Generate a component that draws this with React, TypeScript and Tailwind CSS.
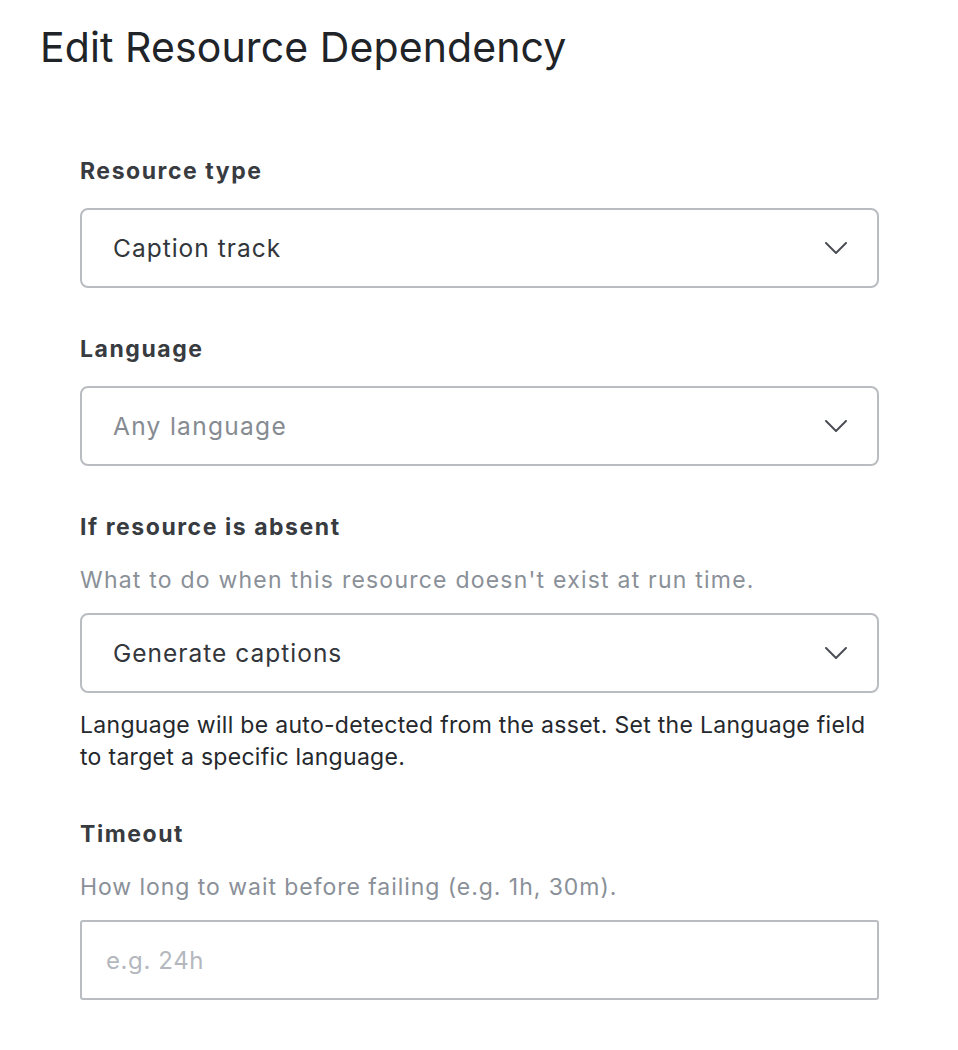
import React from "react";

function Chevron() {
  return (
    <svg width="22" height="12" viewBox="0 0 22 12" fill="none" className="shrink-0">
      <path d="M1 1L11 11L21 1" stroke="#4b4f55" strokeWidth="2" strokeLinecap="round" strokeLinejoin="round" />
    </svg>
  );
}

function Select({ value, placeholder }: { value: string; placeholder?: boolean }) {
  return (
    <div className="flex h-[80px] items-center justify-between rounded-[8px] border-2 border-[#b9bcc1] bg-white pl-[31px] pr-[30px]">
      <span
        className={
          placeholder
            ? "text-[24.5px] tracking-[1.3px] text-[#868b92]"
            : "text-[24.5px] tracking-[1px] text-[#33363b]"
        }
      >
        {value}
      </span>
      <Chevron />
    </div>
  );
}

const label = "text-[23px] font-bold leading-[30px] tracking-[1.55px] text-[#383b40]";

export default function App() {
  return (
    <div className="min-h-[1050px] w-[958px] bg-white font-['Inter',sans-serif]">
      <h1 className="pl-[40px] pt-[23px] text-[41px] font-normal leading-[48px] tracking-[0.1px] text-[#202328]">
        Edit Resource Dependency
      </h1>
      <div className="ml-[80px] mt-[85px] w-[799px]">
        <div className={label}>Resource type</div>
        <div className="mt-[22px]">
          <Select value="Caption track" />
        </div>

        <div className={"mt-[46px] " + label}>Language</div>
        <div className="mt-[22px]">
          <Select value="Any language" placeholder />
        </div>

        <div className={"mt-[46px] " + label}>If resource is absent</div>
        <div className="mt-[22px] text-[23px] leading-[32px] tracking-[1.22px] text-[#8a9098]">
          What to do when this resource doesn't exist at run time.
        </div>
        <div className="mt-[17px]">
          <Select value="Generate captions" />
        </div>
        <div className="mt-[16px] text-[23px] leading-[32px] tracking-[0.3px] text-[#25282c]">
          Language will be auto-detected from the asset. Set the Language field to target a specific language.
        </div>

        <div className="mt-[46px]">
          <div className={label}>Timeout</div>
        </div>
        <div className="mt-[22px] text-[23px] leading-[32px] tracking-[0.95px] text-[#8a9098]">
          How long to wait before failing (e.g. 1h, 30m).
        </div>
        <div className="mt-[17px]">
          <input
            placeholder="e.g. 24h"
            className="h-[80px] w-full rounded-[3px] border-2 border-[#b9bcc1] bg-white px-[24px] text-[24px] tracking-[0.6px] text-[#33363b] outline-none placeholder:text-[#b4b8be]"
          />
        </div>
      </div>
    </div>
  );
}
